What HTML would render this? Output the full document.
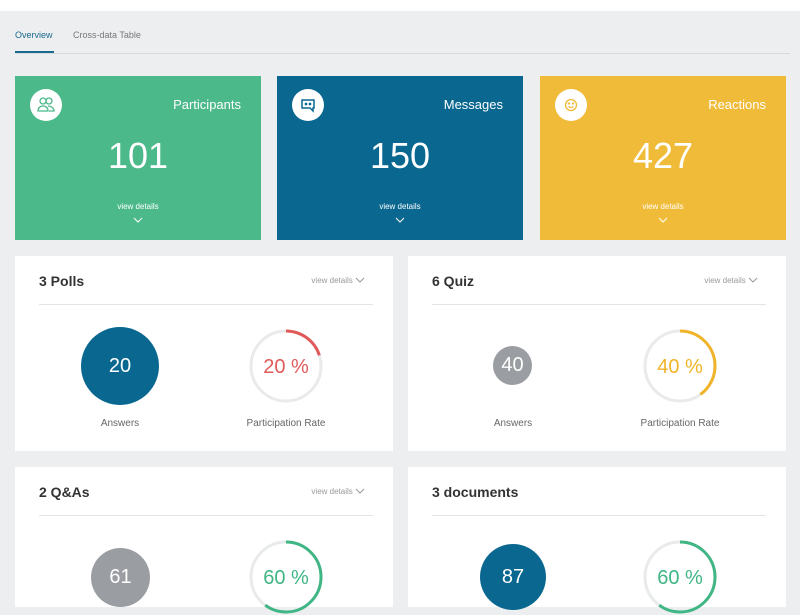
<!DOCTYPE html>
<html><head><meta charset="utf-8"><style>
*{margin:0;padding:0;box-sizing:border-box}
body{width:800px;height:600px;overflow:hidden;background:#eceef0;font-family:"Liberation Sans",sans-serif;position:relative}
.a{position:absolute}
.top{left:0;top:0;width:800px;height:11px;background:#fff}
.tab{font-size:9px;top:30px}
.card{top:76px;width:246px;height:164px;color:#fff}
.card .ic{left:15px;top:13px;width:32px;height:32px;border-radius:50%;background:#fff}
.card .t{right:20px;top:21px;font-size:13px}
.card .n{left:0;width:100%;text-align:center;top:59px;font-size:36px}
.card .v{left:0;width:100%;text-align:center;top:126px;font-size:8px}
.card .c{left:118px;top:141px}
.pan{background:#fff;width:378px}
.pan .h{left:24px;top:17px;font-size:14px;color:#333;font-weight:bold}
.pan .vd{right:28px;top:20px;font-size:8px;color:#999}
.pan .ln{left:24px;right:20px;top:48px;height:1px;background:#e2e4e6}
.lab{font-size:10px;color:#666;text-align:center;width:140px}
.circ{border-radius:50%;color:#fff;display:flex;align-items:center;justify-content:center}
</style></head><body>
<div class="a top"></div>
<div class="a tab" style="left:15px;color:#1a6a8e">Overview</div>
<div class="a tab" style="left:73px;color:#777">Cross-data Table</div>
<div class="a" style="left:15px;top:53px;width:775px;height:1px;background:#d8dadc"></div>
<div class="a" style="left:15px;top:51px;width:39px;height:2px;background:#1a6a8e"></div>

<div class="a card" style="left:15px;background:#4cb98a">
<div class="a ic"><svg width="32" height="32" viewBox="0 0 32 32" fill="none" stroke="#4cb98a" stroke-width="1.3"><circle cx="13" cy="12" r="3"/><circle cx="19" cy="12" r="3"/><path d="M8 22c0-3 2-5 5-5s5 2 5 5zM18 17c3 0 6 2 6 5h-5"/></svg></div>
<div class="a t">Participants</div><div class="a n">101</div><div class="a v">view details</div>
<svg class="a c" width="10" height="6"><path d="M1 1l4 4 4-4" stroke="#fff" fill="none"/></svg></div>

<div class="a card" style="left:277px;background:#0a6790">
<div class="a ic"><svg width="32" height="32" viewBox="0 0 32 32" fill="none" stroke="#0a6790" stroke-width="1.5"><path d="M10 11h12v8h-1v3l-3-3h-8z"/><circle cx="14" cy="15" r=".6" fill="#0a6790"/><circle cx="18" cy="15" r=".6" fill="#0a6790"/></svg></div>
<div class="a t">Messages</div><div class="a n">150</div><div class="a v">view details</div>
<svg class="a c" width="10" height="6"><path d="M1 1l4 4 4-4" stroke="#fff" fill="none"/></svg></div>

<div class="a card" style="left:540px;background:#f0bb38">
<div class="a ic"><svg width="32" height="32" viewBox="0 0 32 32" fill="none" stroke="#f0bb38" stroke-width="1.3"><circle cx="16" cy="16" r="5.5"/><path d="M13.5 17.5q2.5 2 5 0"/><circle cx="14" cy="14.5" r=".5"/><circle cx="18" cy="14.5" r=".5"/></svg></div>
<div class="a t">Reactions</div><div class="a n">427</div><div class="a v">view details</div>
<svg class="a c" width="10" height="6"><path d="M1 1l4 4 4-4" stroke="#fff" fill="none"/></svg></div>

<div class="a pan" style="left:15px;top:256px;height:195px">
<div class="a h">3 Polls</div><div class="a vd">view details <svg width="10" height="6"><path d="M1 1l4 4 4-4" stroke="#999" fill="none"/></svg></div><div class="a ln"></div>
<div class="a circ" style="left:66px;top:71px;width:78px;height:78px;background:#0a6790;font-size:20px">20</div>
<svg class="a" style="left:233px;top:72px" width="76" height="76"><circle cx="38" cy="38" r="35" fill="none" stroke="#e8eaeb" stroke-width="3"/><circle cx="38" cy="38" r="35" fill="none" stroke="#e05a5a" stroke-width="3" stroke-dasharray="44 300" transform="rotate(-90 38 38)"/><text x="38" y="45" text-anchor="middle" font-size="20" fill="#e05a5a" font-family="Liberation Sans">20 %</text></svg>
<div class="a lab" style="left:35px;top:162px">Answers</div>
<div class="a lab" style="left:201px;top:162px">Participation Rate</div>
</div>

<div class="a pan" style="left:408px;top:256px;height:195px">
<div class="a h">6 Quiz</div><div class="a vd">view details <svg width="10" height="6"><path d="M1 1l4 4 4-4" stroke="#999" fill="none"/></svg></div><div class="a ln"></div>
<div class="a circ" style="left:85px;top:90px;width:39px;height:39px;background:#9a9da1;font-size:20px">40</div>
<svg class="a" style="left:234px;top:72px" width="76" height="76"><circle cx="38" cy="38" r="35" fill="none" stroke="#e8eaeb" stroke-width="3"/><circle cx="38" cy="38" r="35" fill="none" stroke="#f0b429" stroke-width="3" stroke-dasharray="88 300" transform="rotate(-90 38 38)"/><text x="38" y="45" text-anchor="middle" font-size="20" fill="#f0b429" font-family="Liberation Sans">40 %</text></svg>
<div class="a lab" style="left:35px;top:162px">Answers</div>
<div class="a lab" style="left:202px;top:162px">Participation Rate</div>
</div>

<div class="a pan" style="left:15px;top:467px;height:140px">
<div class="a h">2 Q&amp;As</div><div class="a vd">view details <svg width="10" height="6"><path d="M1 1l4 4 4-4" stroke="#999" fill="none"/></svg></div><div class="a ln"></div>
<div class="a circ" style="left:76px;top:81px;width:59px;height:59px;background:#9a9da1;font-size:20px">61</div>
<svg class="a" style="left:233px;top:72px" width="76" height="76"><circle cx="38" cy="38" r="35" fill="none" stroke="#e8eaeb" stroke-width="3"/><circle cx="38" cy="38" r="35" fill="none" stroke="#3fb684" stroke-width="3" stroke-dasharray="132 300" transform="rotate(-90 38 38)"/><text x="38" y="45" text-anchor="middle" font-size="20" fill="#3fb684" font-family="Liberation Sans">60 %</text></svg>
</div>

<div class="a pan" style="left:408px;top:467px;height:140px">
<div class="a h">3 documents</div><div class="a ln"></div>
<div class="a circ" style="left:72px;top:77px;width:66px;height:66px;background:#0a6790;font-size:20px">87</div>
<svg class="a" style="left:234px;top:72px" width="76" height="76"><circle cx="38" cy="38" r="35" fill="none" stroke="#e8eaeb" stroke-width="3"/><circle cx="38" cy="38" r="35" fill="none" stroke="#3fb684" stroke-width="3" stroke-dasharray="132 300" transform="rotate(-90 38 38)"/><text x="38" y="45" text-anchor="middle" font-size="20" fill="#3fb684" font-family="Liberation Sans">60 %</text></svg>
</div>
</body></html>
